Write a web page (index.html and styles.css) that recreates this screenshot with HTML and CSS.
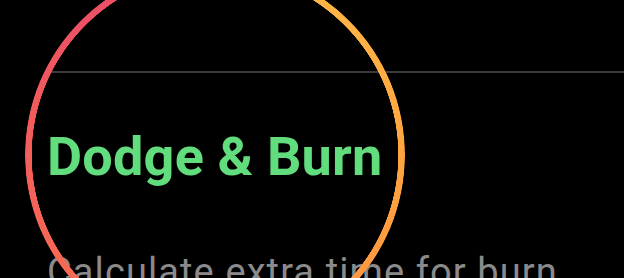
FILE: index.html
```html
<!DOCTYPE html>
<html>
<head>
<meta charset="utf-8">
<link rel="stylesheet" href="styles.css">
</head>
<body>
<div class="screen">
  <div class="divider"></div>
  <div class="content">
    <h1 class="title">Dodge &amp; Burn</h1>
    <p class="subtitle">Calculate extra time for burn</p>
  </div>
  <div class="ring"></div>
</div>
</body>
</html>
```
FILE: styles.css
```css
html, body {
  margin: 0;
  padding: 0;
  background: #000;
  width: 624px;
  height: 278px;
  overflow: hidden;
}
.screen {
  position: relative;
  width: 624px;
  height: 278px;
  overflow: hidden;
  font-family: Roboto, "Liberation Sans", sans-serif;
}
.divider {
  margin-top: 71px;
  margin-left: 50px;
  height: 2px;
  background: #3b3b3b;
}
.content {
  padding-left: 47px;
}
.title {
  margin: 0;
  margin-top: 53px;
  font-size: 54px;
  line-height: 62px;
  font-weight: 700;
  color: #62dd7e;
  white-space: nowrap;
  letter-spacing: 0.2px;
}
.subtitle {
  margin: 0;
  margin-top: 61px;
  font-size: 38px;
  line-height: 46px;
  font-weight: 400;
  color: #8a8a8a;
  white-space: nowrap;
  letter-spacing: 1.1px;
}
.ring {
  position: absolute;
  left: 25px;
  top: -35px;
  width: 380px;
  height: 380px;
  border-radius: 50%;
  background: conic-gradient(from 0deg, #ffc048 0deg, #ffae44 60deg, #ff9c40 120deg, #ff8a46 170deg, #f86a53 230deg, #f25c5c 280deg, #e84c6a 340deg, #ffc048 360deg);
  -webkit-mask: radial-gradient(circle, transparent 183px, #000 183.5px);
  mask: radial-gradient(circle, transparent 183px, #000 183.5px);
  filter: drop-shadow(0 0 10px rgba(255, 120, 50, 0.25));
}
```
